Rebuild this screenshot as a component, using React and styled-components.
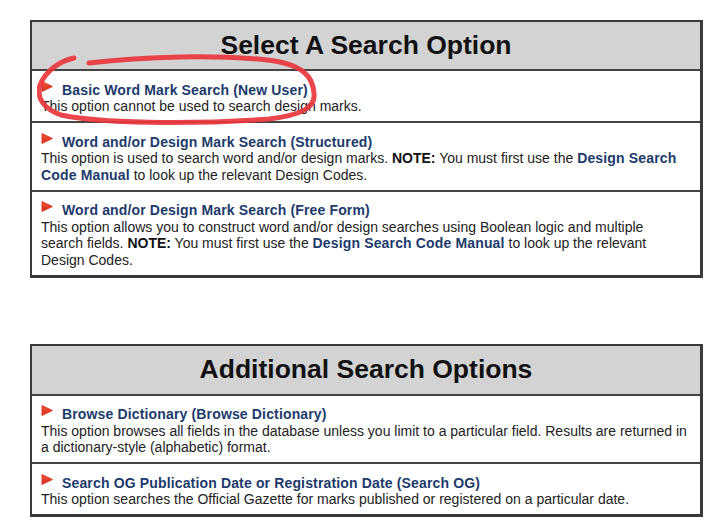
import React from "react";
import styled, { createGlobalStyle } from "styled-components";

const GlobalStyle = createGlobalStyle`
  html, body {
    margin: 0;
    padding: 0;
    background: #fff;
  }
  body {
    font-family: "Liberation Sans", Arial, sans-serif;
    color: #222;
  }
`;

const Page = styled.div`
  position: relative;
  padding: 20px 0 0 30px;
  display: flex;
  flex-direction: column;
  gap: 66px;
`;

const Table = styled.div`
  width: 668px;
  border: 2px solid #3a3a3a;
  border-right-width: 3px;
  border-bottom-width: 3px;
  background: #fff;
`;

const Header = styled.div`
  height: ${(p) => p.$h}px;
  background: #d3d3d3;
  border-bottom: 2px solid #444;
  display: flex;
  align-items: center;
  justify-content: center;
  font-size: 26.5px;
  font-weight: bold;
  color: #111;
`;

const Row = styled.div`
  padding: 10.5px 12px 6.5px 9px;
  font-size: 14px;
  line-height: 16.5px;
  & + & {
    border-top: 2px solid #444;
  }
`;

const Title = styled.div`
  display: flex;
  align-items: flex-start;
  gap: 9px;
  font-weight: bold;
  color: #1c3a6b;
  letter-spacing: 0.15px;
`;

const ArrowIcon = styled.svg`
  flex: none;
  margin-top: -1px;
`;

const Body = styled.div`
  color: #222;
  b {
    color: #111;
  }
`;

const Ref = styled.span`
  font-weight: bold;
  color: #1c3a6b;
  letter-spacing: 0.15px;
`;

const Scribble = styled.svg`
  position: absolute;
  left: 37px;
  top: 53px;
  pointer-events: none;
`;

const searchOptions = [
  {
    title: "Basic Word Mark Search (New User)",
    body: <>This option cannot be used to search design marks.</>,
  },
  {
    title: "Word and/or Design Mark Search (Structured)",
    body: (
      <>
        This option is used to search word and/or design marks. <b>NOTE:</b> You must
        first use the <Ref>Design Search Code Manual</Ref> to look up the relevant
        Design Codes.
      </>
    ),
  },
  {
    title: "Word and/or Design Mark Search (Free Form)",
    body: (
      <>
        This option allows you to construct word and/or design searches using Boolean
        logic and multiple search fields. <b>NOTE:</b> You must first use the{" "}
        <Ref>Design Search Code Manual</Ref> to look up the relevant Design Codes.
      </>
    ),
  },
];

const extraOptions = [
  {
    title: "Browse Dictionary (Browse Dictionary)",
    body: (
      <>
        This option browses all fields in the database unless you limit to a particular
        field. Results are returned in a dictionary-style (alphabetic) format.
      </>
    ),
  },
  {
    title: "Search OG Publication Date or Registration Date (Search OG)",
    body: (
      <>
        This option searches the Official Gazette for marks published or registered on
        a particular date.
      </>
    ),
  },
];

function Arrow() {
  return (
    <ArrowIcon width="12" height="11" viewBox="0 0 12 11">
      <defs>
        <linearGradient id="arrowFill" x1="0" y1="0" x2="0" y2="1">
          <stop offset="0" stopColor="#f05a3a" />
          <stop offset="1" stopColor="#d42a1c" />
        </linearGradient>
      </defs>
      <path d="M1 0.6 L11.4 5.5 L1 10.4 Z" fill="url(#arrowFill)" strokeLinejoin="round" stroke="#e03a26" strokeWidth="1" />
    </ArrowIcon>
  );
}

function OptionTable({ heading, headerHeight, items }) {
  return (
    <Table>
      <Header $h={headerHeight}>{heading}</Header>
      {items.map((item) => (
        <Row key={item.title}>
          <Title>
            <Arrow />
            <span>{item.title}</span>
          </Title>
          <Body>{item.body}</Body>
        </Row>
      ))}
    </Table>
  );
}

export default function App() {
  return (
    <>
      <GlobalStyle />
      <Page>
        <OptionTable heading="Select A Search Option" headerHeight={47} items={searchOptions} />
        <OptionTable heading="Additional Search Options" headerHeight={48} items={extraOptions} />
        <Scribble width="290" height="74" viewBox="0 0 290 74">
          <path
            d="M37 5 C 22 8, 8 19, 3 32 C -1 45, 7 56, 24 62 C 62 70, 150 72, 232 66 C 264 62, 279 55, 277 40 C 276 24, 266 11, 230 7 C 180 2, 110 3, 52 10"
            fill="none"
            stroke="#e8363c"
            strokeWidth="5"
            strokeLinecap="round"
            opacity="0.92"
          />
        </Scribble>
      </Page>
    </>
  );
}
